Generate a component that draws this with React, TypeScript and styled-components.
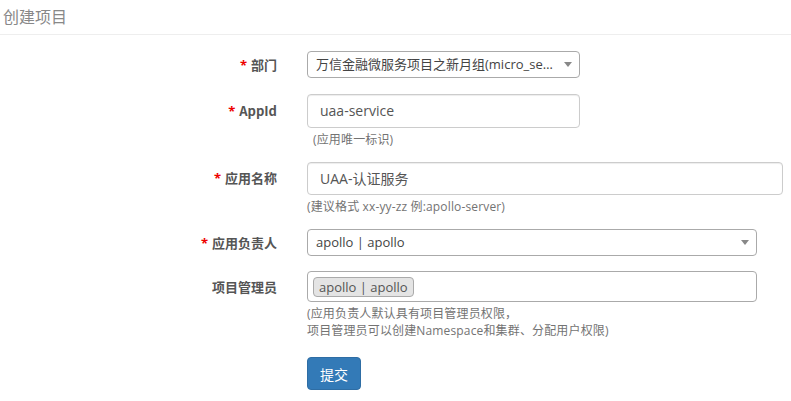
import React from "react";
import styled, { createGlobalStyle } from "styled-components";

const Global = createGlobalStyle`
  html, body { margin: 0; padding: 0; background: #fff; }
  body {
    font-family: "Open Sans", "Noto Sans CJK SC", sans-serif;
    font-size: 14px;
    color: #333;
  }
  * { box-sizing: border-box; }
`;

const Page = styled.div`
  width: 791px;
  height: 401px;
  overflow: hidden;
  background: #fff;
`;

const Header = styled.div`
  height: 35px;
  padding: 4px 3px 0;
  border-bottom: 1px solid #eee;
  font-size: 16px;
  line-height: 24px;
  color: #888;
  font-family: "Noto Sans CJK SC", sans-serif;
`;

const Form = styled.div`
  display: flex;
  flex-direction: column;
`;

const Row = styled.div<{ $top: number }>`
  display: grid;
  grid-template-columns: 292px 1fr;
  margin-top: ${(p) => p.$top}px;
`;

const Label = styled.div<{ $pt: number }>`
  text-align: right;
  padding-right: 15px;
  padding-top: ${(p) => p.$pt}px;
  font-size: 13px;
  line-height: 18px;
  font-weight: bold;
  color: #555;
  font-family: "Noto Sans CJK SC", sans-serif;
`;

const Star = styled.span`
  color: #e00;
  margin-right: 4px;
  font-family: "Open Sans", sans-serif;
`;

const Control = styled.div`
  padding-left: 15px;
`;

const Select = styled.div<{ $w: number }>`
  position: relative;
  width: ${(p) => p.$w}px;
  height: 27px;
  border: 1px solid #aaa;
  border-radius: 4px;
  padding: 0 24px 0 8px;
  font-size: 13px;
  line-height: 25px;
  color: #444;
  white-space: nowrap;
  overflow: hidden;
  text-overflow: ellipsis;
`;

const Arrow = styled.span`
  position: absolute;
  right: 7px;
  top: 10px;
  width: 0;
  height: 0;
  border-left: 4px solid transparent;
  border-right: 4px solid transparent;
  border-top: 5px solid #888;
`;

const Input = styled.div<{ $w: number; $h: number }>`
  width: ${(p) => p.$w}px;
  height: ${(p) => p.$h}px;
  border: 1px solid #ccc;
  border-radius: 4px;
  box-shadow: inset 0 1px 1px rgba(0, 0, 0, 0.075);
  padding: 0 12px;
  font-size: 14px;
  line-height: ${(p) => p.$h - 2}px;
  color: #555;
`;

const Multi = styled.div<{ $w: number }>`
  width: ${(p) => p.$w}px;
  height: 31px;
  border: 1px solid #aaa;
  border-radius: 4px;
  padding: 5px 0 0 5px;
`;

const Tag = styled.span`
  display: inline-block;
  height: 20px;
  padding: 0 5px;
  background: #e4e4e4;
  border: 1px solid #aaa;
  border-radius: 4px;
  font-size: 13px;
  line-height: 18px;
  color: #555;
`;

const Help = styled.div<{ $indent?: number }>`
  margin-top: 3px;
  padding-left: ${(p) => p.$indent ?? 0}px;
  font-size: 12px;
  line-height: 17px;
  letter-spacing: 0.15px;
  color: #737373;
`;

const Button = styled.button`
  width: 54px;
  height: 33px;
  border: 1px solid #2e6da4;
  border-radius: 4px;
  background: #337ab7;
  color: #fff;
  font-size: 14px;
  font-family: "Noto Sans CJK SC", sans-serif;
  padding: 0;
`;

export default function App() {
  return (
    <Page>
      <Global />
      <Header>创建项目</Header>
      <Form>
        <Row $top={16}>
          <Label $pt={5}>
            <Star>*</Star>部门
          </Label>
          <Control>
            <Select $w={273}>
              万信金融微服务项目之新月组(micro_service)
              <Arrow />
            </Select>
          </Control>
        </Row>
        <Row $top={16}>
          <Label $pt={8}>
            <Star>*</Star>AppId
          </Label>
          <Control>
            <Input $w={273} $h={34}>uaa-service</Input>
            <Help $indent={6}>(应用唯一标识)</Help>
          </Control>
        </Row>
        <Row $top={14}>
          <Label $pt={7}>
            <Star>*</Star>应用名称
          </Label>
          <Control>
            <Input $w={476} $h={33}>UAA-认证服务</Input>
            <Help>(建议格式 xx-yy-zz 例:apollo-server)</Help>
          </Control>
        </Row>
        <Row $top={14}>
          <Label $pt={5}>
            <Star>*</Star>应用负责人
          </Label>
          <Control>
            <Select $w={450}>
              apollo | apollo
              <Arrow />
            </Select>
          </Control>
        </Row>
        <Row $top={15}>
          <Label $pt={7}>项目管理员</Label>
          <Control>
            <Multi $w={450}>
              <Tag>apollo | apollo</Tag>
            </Multi>
            <Help>
              (应用负责人默认具有项目管理员权限，
              <br />
              项目管理员可以创建Namespace和集群、分配用户权限)
            </Help>
          </Control>
        </Row>
        <Row $top={18}>
          <div />
          <Control>
            <Button>提交</Button>
          </Control>
        </Row>
      </Form>
    </Page>
  );
}
